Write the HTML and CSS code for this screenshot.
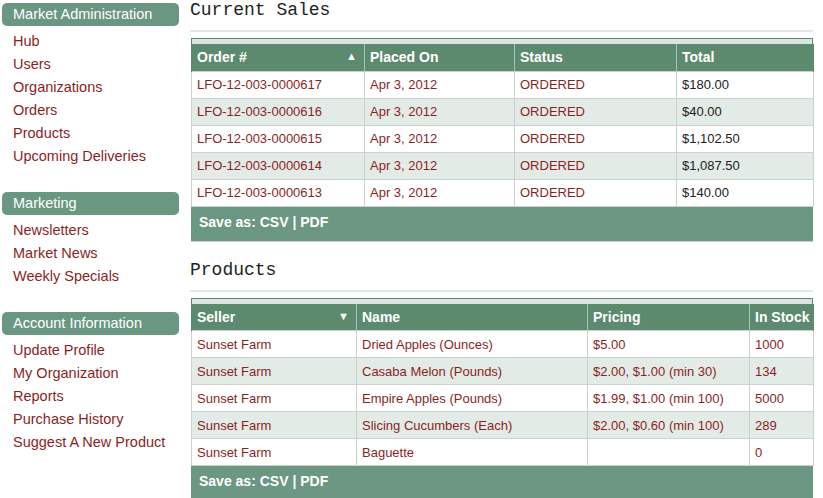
FILE: index.html
```html
<!DOCTYPE html>
<html>
<head>
<meta charset="utf-8">
<link rel="stylesheet" href="styles.css">
</head>
<body>
<div class="page">
  <aside class="sidebar">
    <section class="nav-section">
      <div class="nav-head">Market Administration</div>
      <ul class="nav-list">
        <li><a href="#">Hub</a></li>
        <li><a href="#">Users</a></li>
        <li><a href="#">Organizations</a></li>
        <li><a href="#">Orders</a></li>
        <li><a href="#">Products</a></li>
        <li><a href="#">Upcoming Deliveries</a></li>
      </ul>
    </section>
    <section class="nav-section">
      <div class="nav-head">Marketing</div>
      <ul class="nav-list">
        <li><a href="#">Newsletters</a></li>
        <li><a href="#">Market News</a></li>
        <li><a href="#">Weekly Specials</a></li>
      </ul>
    </section>
    <section class="nav-section">
      <div class="nav-head">Account Information</div>
      <ul class="nav-list">
        <li><a href="#">Update Profile</a></li>
        <li><a href="#">My Organization</a></li>
        <li><a href="#">Reports</a></li>
        <li><a href="#">Purchase History</a></li>
        <li><a href="#">Suggest A New Product</a></li>
      </ul>
    </section>
  </aside>

  <main class="main">
    <section class="panel">
      <h2 class="panel-title">Current Sales</h2>
      <div class="grid-wrap">
        <div class="grid-strip"></div>
        <table class="grid">
          <colgroup>
            <col style="width:173px"><col style="width:150px"><col style="width:162px"><col style="width:137px">
          </colgroup>
          <thead>
            <tr><th><span>Order #</span><span class="sort">&#9650;</span></th><th>Placed On</th><th>Status</th><th>Total</th></tr>
          </thead>
          <tbody>
            <tr><td class="red">LFO-12-003-0000617</td><td class="red">Apr 3, 2012</td><td class="red">ORDERED</td><td>$180.00</td></tr>
            <tr class="alt"><td class="red">LFO-12-003-0000616</td><td class="red">Apr 3, 2012</td><td class="red">ORDERED</td><td>$40.00</td></tr>
            <tr><td class="red">LFO-12-003-0000615</td><td class="red">Apr 3, 2012</td><td class="red">ORDERED</td><td>$1,102.50</td></tr>
            <tr class="alt"><td class="red">LFO-12-003-0000614</td><td class="red">Apr 3, 2012</td><td class="red">ORDERED</td><td>$1,087.50</td></tr>
            <tr><td class="red">LFO-12-003-0000613</td><td class="red">Apr 3, 2012</td><td class="red">ORDERED</td><td>$140.00</td></tr>
          </tbody>
        </table>
        <div class="grid-foot">Save as: CSV | PDF</div>
      </div>
    </section>

    <section class="panel">
      <h2 class="panel-title">Products</h2>
      <div class="grid-wrap">
        <div class="grid-strip"></div>
        <table class="grid">
          <colgroup>
            <col style="width:165px"><col style="width:231px"><col style="width:162px"><col style="width:64px">
          </colgroup>
          <thead>
            <tr><th><span>Seller</span><span class="sort">&#9660;</span></th><th>Name</th><th>Pricing</th><th>In Stock</th></tr>
          </thead>
          <tbody>
            <tr><td class="red">Sunset Farm</td><td class="red">Dried Apples (Ounces)</td><td class="red">$5.00</td><td class="red">1000</td></tr>
            <tr class="alt"><td class="red">Sunset Farm</td><td class="red">Casaba Melon (Pounds)</td><td class="red">$2.00, $1.00 (min 30)</td><td class="red">134</td></tr>
            <tr><td class="red">Sunset Farm</td><td class="red">Empire Apples (Pounds)</td><td class="red">$1.99, $1.00 (min 100)</td><td class="red">5000</td></tr>
            <tr class="alt"><td class="red">Sunset Farm</td><td class="red">Slicing Cucumbers (Each)</td><td class="red">$2.00, $0.60 (min 100)</td><td class="red">289</td></tr>
            <tr><td class="red">Sunset Farm</td><td class="red">Baguette</td><td class="red"></td><td class="red">0</td></tr>
          </tbody>
        </table>
        <div class="grid-foot">Save as: CSV | PDF</div>
      </div>
    </section>
  </main>
</div>
</body>
</html>
```

FILE: styles.css
```css
html, body {
  margin: 0;
  padding: 0;
  background: #ffffff;
}

body {
  font-family: "Liberation Sans", Arial, sans-serif;
  color: #222222;
}

.page {
  display: flex;
  align-items: flex-start;
}

.sidebar {
  width: 177px;
  margin-left: 2px;
  padding-top: 3px;
  display: flex;
  flex-direction: column;
  gap: 24px;
}

.nav-head {
  height: 23px;
  line-height: 23px;
  background: #6a9782;
  color: #ffffff;
  font-size: 14.5px;
  padding-left: 11px;
  border-radius: 5px;
}

.nav-list {
  list-style: none;
  margin: 4px 0 0 0;
  padding: 0 0 0 11px;
}

.nav-list li {
  height: 23px;
  line-height: 23px;
  font-size: 14.5px;
}

.nav-list a {
  color: #8a1f1f;
  text-decoration: none;
}

.main {
  margin-left: 11px;
  width: 623px;
  display: flex;
  flex-direction: column;
  gap: 18px;
}

.panel-title {
  margin: 0;
  font-family: "Liberation Mono", "Courier New", monospace;
  font-weight: normal;
  font-size: 18px;
  line-height: 20px;
  color: #1e1e1e;
  padding-bottom: 10px;
  border-bottom: 2px solid #e2e8e5;
}

.grid-wrap {
  margin-top: 6px;
  margin-left: 1px;
  width: 622px;
  border-bottom: 1px solid #c9cfcc;
}

.grid-strip {
  background: #dce4e0;
  border-top: 1px solid #5c8a6f;
  border-left: 1px solid #5c8a6f;
  border-right: 1px solid #5c8a6f;
  box-sizing: border-box;
  height: 6px;
}

.grid {
  width: 622px;
  border-collapse: collapse;
  table-layout: fixed;
}

.grid th {
  height: 27px;
  padding: 0 3px 0 5px;
  background: #5c8a6f;
  color: #ffffff;
  font-size: 14px;
  font-weight: bold;
  text-align: left;
  white-space: nowrap;
  border-left: 1px solid #a9c3b4;
  border-right: 1px solid #a9c3b4;
  box-sizing: border-box;
}

.grid th:first-child {
  border-left: 1px solid #5c8a6f;
}

.grid th:last-child {
  border-right: 1px solid #5c8a6f;
}

.grid th .sort {
  float: right;
  font-size: 11px;
  margin-right: 4px;
  margin-top: 1px;
}

.grid td {
  height: 26px;
  padding: 0 5px 0 5px;
  font-size: 13px;
  border: 1px solid #cbd1ce;
  white-space: nowrap;
  overflow: hidden;
}

.grid tr.alt td {
  background: #e3ebe7;
}

.grid td.red {
  color: #8a1f1f;
}

.grid-foot {
  height: 34px;
  line-height: 31px;
  background: #6b9783;
  color: #ffffff;
  font-size: 14px;
  font-weight: bold;
  padding-left: 8px;
}
```
